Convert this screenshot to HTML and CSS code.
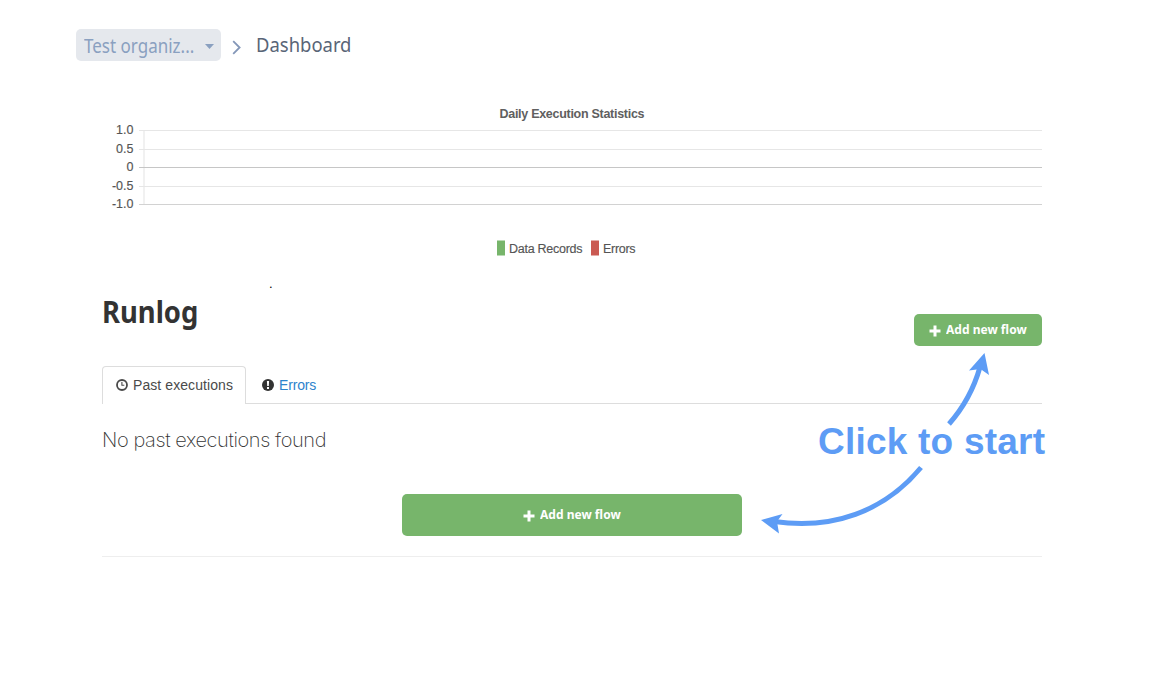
FILE: index.html
```html
<!DOCTYPE html>
<html lang="en">
<head>
<meta charset="utf-8">
<title>Dashboard</title>
<link rel="stylesheet" href="styles.css">
</head>
<body>
<header class="breadcrumb">
  <button class="org"><span class="org-name">Test organiz...</span><svg class="caret" width="9" height="5" viewBox="0 0 9 5"><path d="M0 0h9L4.500 5z" fill="#8aa0c0"/></svg></button>
  <svg class="chevron" width="9" height="15" viewBox="0 0 9 15"><path d="M1.200 1.200L7.600 7.500 1.200 13.800" fill="none" stroke="#8497b8" stroke-width="1.800"/></svg>
  <span class="crumb">Dashboard</span>
</header>
<main class="content">
  <svg class="chart" width="940" height="170" viewBox="0 0 940 170">
    <text class="chart-title" x="397.500" y="18" textLength="145">Daily Execution Statistics</text>
    <g class="axis">
      <text x="31.500" y="34">1.0</text><text x="31.500" y="53">0.5</text><text x="31.500" y="71">0</text><text x="31.500" y="90">-0.5</text><text x="31.500" y="108">-1.0</text>
    </g>
    <rect x="41" y="30" width="2" height="75" fill="#f1f1f1"/>
    <g fill="#e6e6e6">
      <rect x="37" y="30" width="903" height="1"/><rect x="37" y="49" width="903" height="1"/><rect x="37" y="86" width="903" height="1"/>
    </g>
    <rect x="37" y="67" width="903" height="1" fill="#c6c6c6"/>
    <rect x="37" y="104" width="903" height="1" fill="#d2d2d2"/>
    <rect x="395" y="140.500" width="8" height="15" fill="#77b56b"/>
    <text class="legend" x="407" y="153" textLength="73.500">Data Records</text>
    <rect x="489" y="140.500" width="8" height="15" fill="#ca5a52"/>
    <text class="legend" x="501" y="153" textLength="32.500">Errors</text>
  </svg>
  <div class="stray">.</div>
  <section class="heading">
    <h1>Runlog</h1>
    <button class="btn"><svg class="plus" width="12" height="12" viewBox="0 0 12 12"><path d="M6 .5v11M.5 6h11"/></svg><span class="btn-label">Add new flow</span></button>
  </section>
  <nav class="tabs">
    <a class="tab active"><svg width="12" height="12" viewBox="0 0 12 12"><circle cx="6" cy="6" r="5" fill="none" stroke="#4a4a4a" stroke-width="1.800"/><path d="M5.900 3v3.300H8.300" fill="none" stroke="#4a4a4a" stroke-width="1.100"/></svg><span class="tab-past">Past executions</span></a>
    <a class="tab"><svg width="12" height="12" viewBox="0 0 12 12"><circle cx="6" cy="6" r="6" fill="#333"/><path d="M4.900 2h2.200l-.3 5H5.200zM5 8h2v2H5z" fill="#fff"/></svg><span class="tab-errors">Errors</span></a>
  </nav>
  <p class="empty">No past executions found</p>
  <div class="action"><button class="btn wide"><svg class="plus" width="12" height="12" viewBox="0 0 12 12"><path d="M6 .5v11M.5 6h11"/></svg><span class="btn-label">Add new flow</span></button></div>
</main>
<svg class="callout" width="310" height="200" viewBox="750 345 310 200">
  <path d="M949 424Q971 399 980 367M921 467.500C884 512 832 530 774 521.500" fill="none" stroke="#5d9cf5" stroke-width="5"/>
  <path d="M984.500 353L989 375 980.500 369 969 370.500zM761 520L782.500 514 777 521.500 779 533.500z" fill="#5d9cf5"/>
  <text x="818" y="453.500" textLength="227">Click to start</text>
</svg>
</body>
</html>
```
FILE: styles.css
```css
* { box-sizing: border-box; }
body {
  margin: 0;
  position: relative;
  height: 678px;
  overflow: hidden;
  background: #fff;
  color: #333;
  font-family: "Liberation Sans", Arial, sans-serif;
}
button { border: 0; font: inherit; }
svg { display: block; flex: none; }
.breadcrumb {
  display: flex;
  height: 61px;
  padding: 29px 0 0 76px;
  font-family: "Noto Sans", sans-serif;
}
.org {
  display: flex;
  align-items: center;
  width: 145px;
  height: 32px;
  padding: 2px 8px 0;
  border-radius: 5px;
  background: #e5e8ed;
  color: #8aa0c0;
}
.org-name {
  width: 121px;
  text-align: left;
  font-size: 19px;
  line-height: 30px;
  white-space: nowrap;
  transform: scaleX(.895);
  transform-origin: left;
}
.chevron { margin: 11px 15px 0 11px; }
.crumb {
  color: #596577;
  font-size: 20px;
  line-height: 32px;
  transform: scaleX(.922);
  transform-origin: left;
}
.content { width: 940px; margin: 39px 0 0 102px; }
.chart text { fill: #555; font-size: 12.5px; stroke: #555; stroke-width: .15px; }
.chart .chart-title { font-weight: bold; fill: #606060; stroke: none; }
.axis { text-anchor: end; }
.stray {
  height: 20px;
  padding-left: 167px;
  color: #000;
  font-size: 13px;
  line-height: 27px;
}
.heading {
  display: flex;
  justify-content: space-between;
  height: 76px;
}
h1 {
  margin: 0;
  font: bold 31px/42px "Noto Sans", sans-serif;
  transform: scaleX(.885);
  transform-origin: left;
}
.btn {
  display: flex;
  align-items: center;
  justify-content: center;
  gap: 5px;
  width: 128px;
  height: 32px;
  margin-top: 24px;
  padding: 0 0 2px;
  border-radius: 5px;
  background: #77b56b;
  color: #fff;
  font: bold 13px "Noto Sans", sans-serif;
  white-space: nowrap;
}
.btn-label {
  width: 81px;
  text-align: left;
  transform: scaleX(.925);
  transform-origin: left;
}
.plus { margin-top: 3px; fill: none; stroke: #fff; stroke-width: 3; }
.tabs {
  display: flex;
  height: 38px;
  border-bottom: 1px solid #ddd;
}
.tab {
  display: flex;
  align-items: center;
  gap: 5px;
  height: 38px;
  padding-left: 16px;
  color: #2d83cc;
  font-size: 14px;
}
.tab.active {
  width: 144px;
  padding: 0 0 1px 13px;
  border: 1px solid #ddd;
  border-bottom: 0;
  border-radius: 4px 4px 0 0;
  background: #fff;
  color: #4a4a4a;
}
.tab-past { letter-spacing: .08px; }
.tab-errors { letter-spacing: -.15px; }
.empty {
  margin: 21px 0 39px;
  font: 200 20px/30px Inter, sans-serif;
  letter-spacing: -0.4px;
}
.action {
  display: flex;
  justify-content: center;
  height: 63px;
  border-bottom: 1px solid #eee;
}
.wide { width: 340px; height: 42px; margin: 0; }
.callout { position: absolute; left: 750px; top: 345px; }
.callout text { fill: #5d9cf5; font-size: 37px; font-weight: bold; }
```
